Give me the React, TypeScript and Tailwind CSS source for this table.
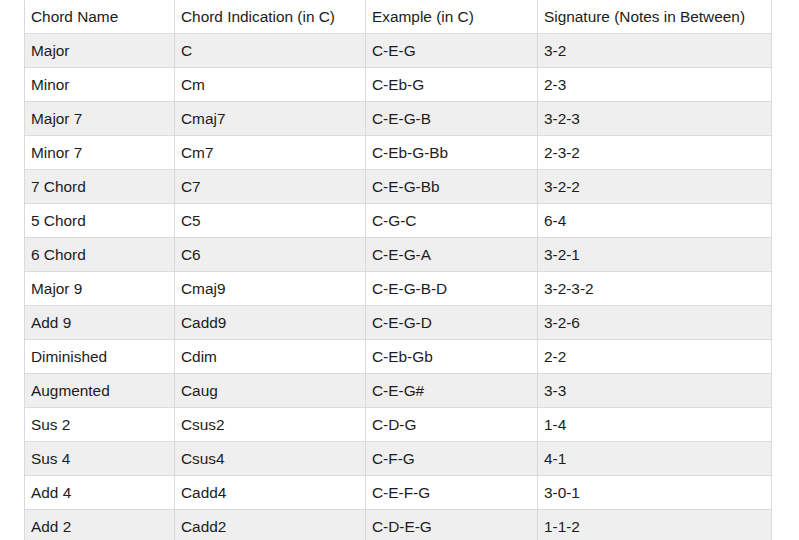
import React from "react";

const header = ["Chord Name", "Chord Indication (in C)", "Example (in C)", "Signature (Notes in Between)"];
const rows: string[][] = [
  ["Major", "C", "C-E-G", "3-2"],
  ["Minor", "Cm", "C-Eb-G", "2-3"],
  ["Major 7", "Cmaj7", "C-E-G-B", "3-2-3"],
  ["Minor 7", "Cm7", "C-Eb-G-Bb", "2-3-2"],
  ["7 Chord", "C7", "C-E-G-Bb", "3-2-2"],
  ["5 Chord", "C5", "C-G-C", "6-4"],
  ["6 Chord", "C6", "C-E-G-A", "3-2-1"],
  ["Major 9", "Cmaj9", "C-E-G-B-D", "3-2-3-2"],
  ["Add 9", "Cadd9", "C-E-G-D", "3-2-6"],
  ["Diminished", "Cdim", "C-Eb-Gb", "2-2"],
  ["Augmented", "Caug", "C-E-G#", "3-3"],
  ["Sus 2", "Csus2", "C-D-G", "1-4"],
  ["Sus 4", "Csus4", "C-F-G", "4-1"],
  ["Add 4", "Cadd4", "C-E-F-G", "3-0-1"],
  ["Add 2", "Cadd2", "C-D-E-G", "1-1-2"],
];

function Row({ cells, striped }: { cells: string[]; striped: boolean }) {
  return (
    <div className={`grid grid-cols-[150px_191px_172px_234px] h-[34px] ${striped ? "bg-[#efefef]" : "bg-white"}`}>
      {cells.map((c, i) => (
        <div
          key={i}
          className="border-r border-b border-[#dadada] pl-[6px] flex items-center text-[15.4px] text-[#1c1c1c] whitespace-nowrap"
        >
          {c}
        </div>
      ))}
    </div>
  );
}

export default function App() {
  return (
    <div className="w-[799px] h-[540px] overflow-hidden bg-white" style={{ fontFamily: '"Liberation Sans", Arial, sans-serif' }}>
      <div className="ml-[24px] w-[748px] border-l border-[#dadada]">
        <Row cells={header} striped={false} />
        {rows.map((r, i) => (
          <Row key={i} cells={r} striped={i % 2 === 0} />
        ))}
      </div>
    </div>
  );
}
